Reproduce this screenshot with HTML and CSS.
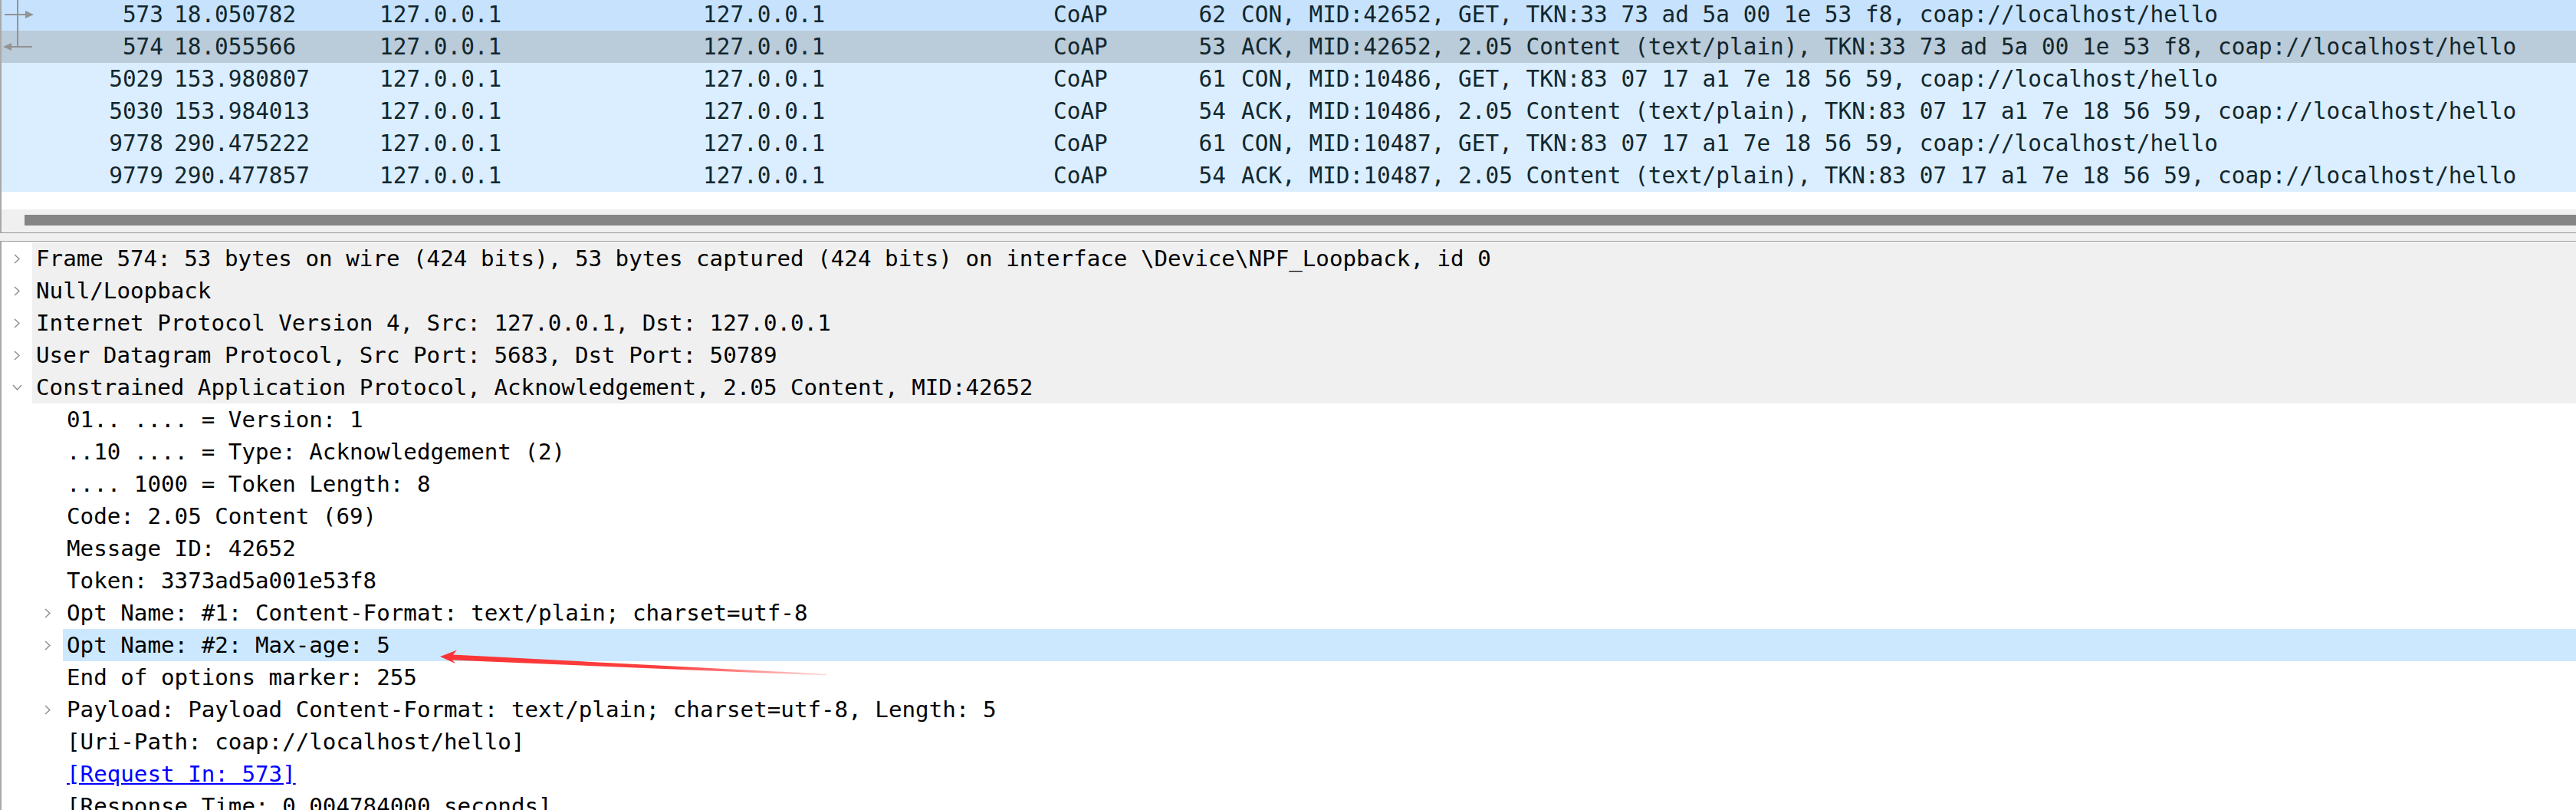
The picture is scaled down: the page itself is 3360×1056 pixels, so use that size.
FILE: index.html
```html
<!DOCTYPE html>
<html>
<head>
<meta charset="utf-8">
<link rel="stylesheet" href="styles.css">
</head>
<body>
<div class="app">
  <section class="plist">
    <div class="prow r-hover"><span class="c-no">573</span><span class="c-time">18.050782</span><span class="c-src">127.0.0.1</span><span class="c-dst">127.0.0.1</span><span class="c-proto">CoAP</span><span class="c-len">62</span><span class="c-info">CON, MID:42652, GET, TKN:33 73 ad 5a 00 1e 53 f8, coap://localhost/hello</span></div>
    <div class="prow r-sel"><span class="c-no">574</span><span class="c-time">18.055566</span><span class="c-src">127.0.0.1</span><span class="c-dst">127.0.0.1</span><span class="c-proto">CoAP</span><span class="c-len">53</span><span class="c-info">ACK, MID:42652, 2.05 Content (text/plain), TKN:33 73 ad 5a 00 1e 53 f8, coap://localhost/hello</span></div>
    <div class="prow"><span class="c-no">5029</span><span class="c-time">153.980807</span><span class="c-src">127.0.0.1</span><span class="c-dst">127.0.0.1</span><span class="c-proto">CoAP</span><span class="c-len">61</span><span class="c-info">CON, MID:10486, GET, TKN:83 07 17 a1 7e 18 56 59, coap://localhost/hello</span></div>
    <div class="prow"><span class="c-no">5030</span><span class="c-time">153.984013</span><span class="c-src">127.0.0.1</span><span class="c-dst">127.0.0.1</span><span class="c-proto">CoAP</span><span class="c-len">54</span><span class="c-info">ACK, MID:10486, 2.05 Content (text/plain), TKN:83 07 17 a1 7e 18 56 59, coap://localhost/hello</span></div>
    <div class="prow"><span class="c-no">9778</span><span class="c-time">290.475222</span><span class="c-src">127.0.0.1</span><span class="c-dst">127.0.0.1</span><span class="c-proto">CoAP</span><span class="c-len">61</span><span class="c-info">CON, MID:10487, GET, TKN:83 07 17 a1 7e 18 56 59, coap://localhost/hello</span></div>
    <div class="prow"><span class="c-no">9779</span><span class="c-time">290.477857</span><span class="c-src">127.0.0.1</span><span class="c-dst">127.0.0.1</span><span class="c-proto">CoAP</span><span class="c-len">54</span><span class="c-info">ACK, MID:10487, 2.05 Content (text/plain), TKN:83 07 17 a1 7e 18 56 59, coap://localhost/hello</span></div>
    <div class="pblank"></div>
    <div class="hscroll"><div class="thumb"></div></div>
    <svg class="related" width="50" height="70" viewBox="0 0 50 70">
      <line x1="23" y1="0" x2="23" y2="62" stroke="#939393" stroke-width="2"/>
      <line x1="6" y1="19" x2="35" y2="19" stroke="#939393" stroke-width="2"/>
      <polygon points="33,14 44,19 33,24" fill="#939393"/>
      <line x1="14" y1="61" x2="42" y2="61" stroke="#939393" stroke-width="2"/>
      <polygon points="15,56 4,61 15,66" fill="#939393"/>
    </svg>
  </section>
  <div class="splitter"></div>
  <section class="details">
    <div class="node top"><span class="exp"><svg width="8" height="13" viewBox="0 0 8 13"><path d="M1 1 L7 6.5 L1 12" fill="none" stroke="#8c8c8c" stroke-width="1.4"/></svg></span><span class="lbl">Frame 574: 53 bytes on wire (424 bits), 53 bytes captured (424 bits) on interface \Device\NPF_Loopback, id 0</span></div>
    <div class="node top"><span class="exp"><svg width="8" height="13" viewBox="0 0 8 13"><path d="M1 1 L7 6.5 L1 12" fill="none" stroke="#8c8c8c" stroke-width="1.4"/></svg></span><span class="lbl">Null/Loopback</span></div>
    <div class="node top"><span class="exp"><svg width="8" height="13" viewBox="0 0 8 13"><path d="M1 1 L7 6.5 L1 12" fill="none" stroke="#8c8c8c" stroke-width="1.4"/></svg></span><span class="lbl">Internet Protocol Version 4, Src: 127.0.0.1, Dst: 127.0.0.1</span></div>
    <div class="node top"><span class="exp"><svg width="8" height="13" viewBox="0 0 8 13"><path d="M1 1 L7 6.5 L1 12" fill="none" stroke="#8c8c8c" stroke-width="1.4"/></svg></span><span class="lbl">User Datagram Protocol, Src Port: 5683, Dst Port: 50789</span></div>
    <div class="node top"><span class="exp"><svg width="13" height="8" viewBox="0 0 13 8"><path d="M1 1 L6.5 7 L12 1" fill="none" stroke="#8c8c8c" stroke-width="1.4"/></svg></span><span class="lbl">Constrained Application Protocol, Acknowledgement, 2.05 Content, MID:42652</span></div>
    <div class="node l1"><span class="exp"></span><span class="lbl">01.. .... = Version: 1</span></div>
    <div class="node l1"><span class="exp"></span><span class="lbl">..10 .... = Type: Acknowledgement (2)</span></div>
    <div class="node l1"><span class="exp"></span><span class="lbl">.... 1000 = Token Length: 8</span></div>
    <div class="node l1"><span class="exp"></span><span class="lbl">Code: 2.05 Content (69)</span></div>
    <div class="node l1"><span class="exp"></span><span class="lbl">Message ID: 42652</span></div>
    <div class="node l1"><span class="exp"></span><span class="lbl">Token: 3373ad5a001e53f8</span></div>
    <div class="node l1"><span class="exp"><svg width="8" height="13" viewBox="0 0 8 13"><path d="M1 1 L7 6.5 L1 12" fill="none" stroke="#8c8c8c" stroke-width="1.4"/></svg></span><span class="lbl">Opt Name: #1: Content-Format: text/plain; charset=utf-8</span></div>
    <div class="node l1 sel"><span class="exp"><svg width="8" height="13" viewBox="0 0 8 13"><path d="M1 1 L7 6.5 L1 12" fill="none" stroke="#8c8c8c" stroke-width="1.4"/></svg></span><span class="lbl">Opt Name: #2: Max-age: 5</span></div>
    <div class="node l1"><span class="exp"></span><span class="lbl">End of options marker: 255</span></div>
    <div class="node l1"><span class="exp"><svg width="8" height="13" viewBox="0 0 8 13"><path d="M1 1 L7 6.5 L1 12" fill="none" stroke="#8c8c8c" stroke-width="1.4"/></svg></span><span class="lbl">Payload: Payload Content-Format: text/plain; charset=utf-8, Length: 5</span></div>
    <div class="node l1"><span class="exp"></span><span class="lbl">[Uri-Path: coap://localhost/hello]</span></div>
    <div class="node l1"><span class="exp"></span><span class="lbl"><a class="link" href="#">[Request In: 573]</a></span></div>
    <div class="node l1"><span class="exp"></span><span class="lbl">[Response Time: 0.004784000 seconds]</span></div>
  </section>
  <svg class="annot" width="3360" height="1056" viewBox="0 0 3360 1056">
    <defs>
      <linearGradient id="fade" x1="574" y1="0" x2="1080" y2="0" gradientUnits="userSpaceOnUse">
        <stop offset="0" stop-color="#fb3535" stop-opacity="1"/>
        <stop offset="0.6" stop-color="#fb3535" stop-opacity="0.95"/>
        <stop offset="1" stop-color="#fb3535" stop-opacity="0.15"/>
      </linearGradient>
    </defs>
    <polygon points="574,858 596,849.5 591,855.5 1078,880.8 1078,882.6 590,862.6 594,867" fill="url(#fade)"/>
  </svg>
</div>
</body>
</html>
```
FILE: styles.css
```css
html, body {
  margin: 0;
  padding: 0;
}
body {
  width: 3360px;
  height: 1056px;
  overflow: hidden;
  background: #ffffff;
  font-family: "DejaVu Sans Mono", "Liberation Mono", monospace;
  font-size: 29.2px;
}
.app {
  position: relative;
  width: 3360px;
  height: 1056px;
}
.plist {
  position: relative;
  margin-top: -2px;
  border-left: 2px solid #a9a9a9;
  border-bottom: 1px solid #9a9a9a;
  background: #ffffff;
}
.prow {
  display: grid;
  grid-template-columns: 211px 282px 422px 457px 166px 59px 1fr;
  height: 42px;
  line-height: 42px;
  align-items: center;
  background: #daeeff;
  color: #12272e;
  white-space: pre;
  font-size: 29.4px;
}
.prow.r-hover { background: #c6e2fc; }
.prow.r-sel { background: #bacbd9; }
.c-no { text-align: right; }
.c-time { padding-left: 14px; }
.c-len { text-align: right; }
.c-info { padding-left: 20px; }
.pblank { height: 23px; }
.hscroll {
  height: 30px;
  background: #f0f0f0;
  display: flex;
  align-items: flex-start;
}
.thumb {
  margin-top: 7px;
  margin-left: 30px;
  height: 14px;
  flex: 1;
  background: #858585;
}
.related {
  position: absolute;
  left: -2px;
  top: 2px;
}
.splitter {
  height: 10px;
  background: #f0f0f0;
}
.details {
  border-top: 1px solid #9a9a9a;
  border-left: 2px solid #a9a9a9;
  padding-top: 1px;
  color: #000000;
}
.node {
  display: flex;
  height: 42px;
  line-height: 42px;
  white-space: pre;
}
.node.l1 { padding-left: 40px; }
.exp {
  width: 40px;
  flex: none;
  display: flex;
  align-items: center;
  justify-content: center;
}
.exp svg { display: block; }
.lbl {
  flex: 1;
  padding-left: 5px;
}
.node.top .lbl { background: #f0f0f0; }
.node.sel .lbl { background: #cce8ff; }
.link {
  color: #0000ff;
  text-decoration: underline;
}
.annot {
  position: absolute;
  left: 0;
  top: 0;
  pointer-events: none;
}
```
